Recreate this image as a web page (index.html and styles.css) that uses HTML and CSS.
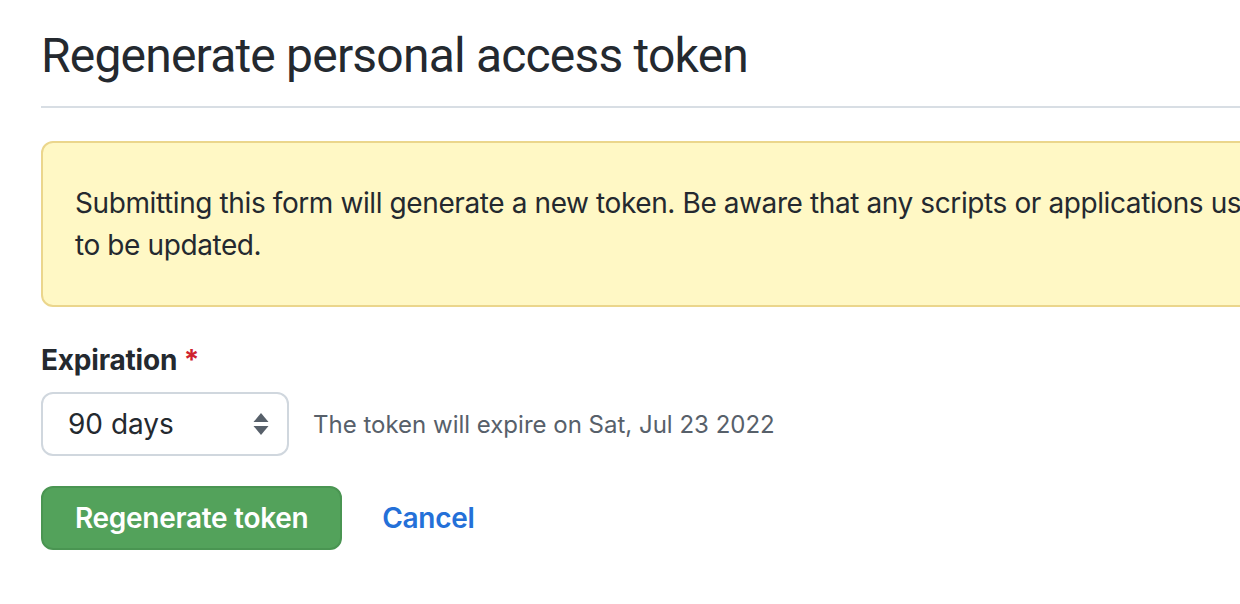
FILE: index.html
```html
<!DOCTYPE html>
<html lang="en">
<head>
<meta charset="utf-8">
<title>Regenerate personal access token</title>
<link rel="stylesheet" href="styles.css">
</head>
<body>
<main class="page">
  <div class="subhead">
    <h1 class="subhead-heading">Regenerate personal access token</h1>
  </div>
  <div class="flash">
    Submitting this form will generate a new token. Be aware that any scripts or applications using this token will need to be updated.
  </div>
  <form class="form">
    <div class="form-group">
      <label class="label" for="exp">Expiration <span class="required">*</span></label>
      <div class="expiry-row">
        <div class="select" id="exp">
          <span class="select-value">90 days</span>
          <svg class="select-arrows" width="16" height="24" viewBox="0 0 16 24" aria-hidden="true">
            <path d="M8 1 L15.5 10 H0.5 Z" fill="#57606a"/>
            <path d="M8 23 L15.5 14 H0.5 Z" fill="#57606a"/>
          </svg>
        </div>
        <span class="note">The token will expire on Sat, Jul 23 2022</span>
      </div>
    </div>
    <div class="actions">
      <button type="button" class="btn-primary">Regenerate token</button>
      <a class="cancel" href="#">Cancel</a>
    </div>
  </form>
</main>
</body>
</html>
```
FILE: styles.css
```css
html, body {
  margin: 0;
  padding: 0;
  background: #ffffff;
  overflow: hidden;
}

body {
  font-family: "Inter", "Noto Sans", sans-serif;
  color: #24292f;
}

.page {
  width: 1530px;
  padding-left: 41px;
}

.subhead {
  border-bottom: 2px solid #d8dee4;
  padding-top: 20px;
  padding-bottom: 14px;
}

.subhead-heading {
  margin: 0;
  font-family: "Roboto", "Inter", sans-serif;
  font-size: 48px;
  line-height: 72px;
  font-weight: 400;
  letter-spacing: -0.8px;
  color: #24292f;
}

.flash {
  margin-top: 33px;
  padding: 39px 32px;
  background: #fff8c5;
  border: 2px solid #ebd68c;
  border-radius: 12px;
  font-size: 28px;
  line-height: 42px;
  letter-spacing: -0.4px;
}

.form {
  margin: 0;
}

.form-group {
  margin-top: 32px;
}

.label {
  display: block;
  font-size: 28px;
  line-height: 42px;
  font-weight: 700;
  margin-bottom: 11px;
  letter-spacing: -0.2px;
}

.required {
  color: #cf222e;
}

.expiry-row {
  display: flex;
  align-items: center;
}

.select {
  box-sizing: border-box;
  width: 248px;
  height: 64px;
  border: 2px solid #d0d7de;
  border-radius: 12px;
  padding: 0 18px 0 25px;
  display: flex;
  align-items: center;
  justify-content: space-between;
  font-size: 28px;
}

.select-arrows {
  display: block;
}

.note {
  margin-left: 24px;
  font-size: 24px;
  color: #57606a;
}

.actions {
  margin-top: 30px;
  display: flex;
  align-items: center;
}

.btn-primary {
  box-sizing: border-box;
  height: 64px;
  padding: 0 32px;
  background: #53a25b;
  border: 2px solid #4a9552;
  border-radius: 12px;
  color: #ffffff;
  font-family: "Inter", "Noto Sans", sans-serif;
  font-size: 28px;
  font-weight: 600;
  letter-spacing: -0.3px;
}

.cancel {
  margin-left: 40px;
  font-size: 28px;
  font-weight: 600;
  color: #2470d8;
  text-decoration: none;
  letter-spacing: -0.3px;
}
```
